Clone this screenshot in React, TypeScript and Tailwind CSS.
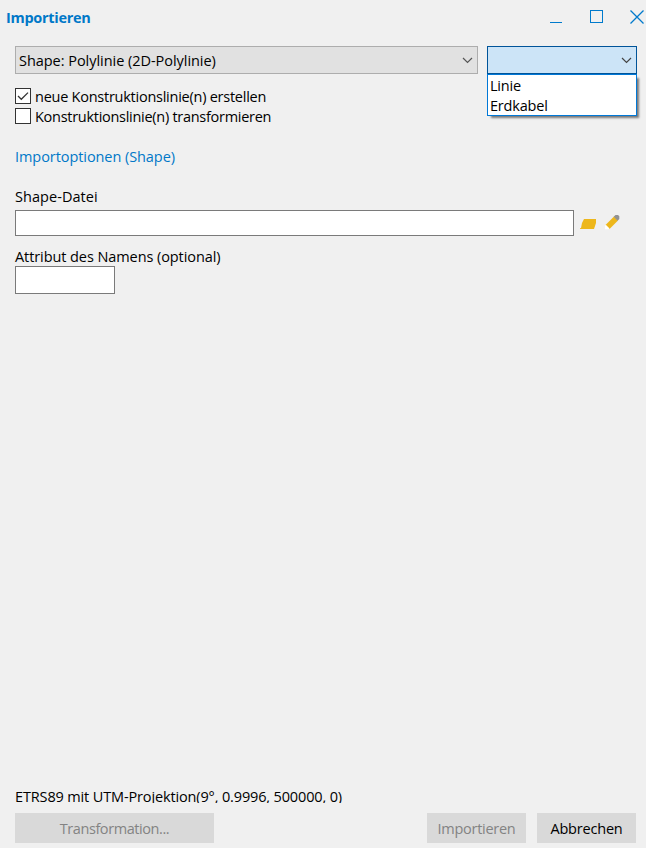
import type { ReactNode } from "react";

function Chevron({ color }: { color: string }) {
  return (
    <svg width="11" height="7" viewBox="0 0 11 7" fill="none" className="shrink-0">
      <path d="M1 1l4.5 4.5L10 1" stroke={color} strokeWidth="1.2" />
    </svg>
  );
}

function TitleBar() {
  return (
    <header className="flex h-[46px] items-start justify-between text-[#0078c8]">
      <h1 className="mt-2 ml-[6px] text-[14.5px] leading-5 font-bold tracking-[-0.3px]">Importieren</h1>
      <svg width="98" height="34" viewBox="548 0 98 34" fill="none" stroke="#007acc" shapeRendering="crispEdges">
        <path d="M550 22.5H562" />
        <path d="M590.5 10.5H602.5V22.5H590.5Z" />
        <path d="M630.5 10.5L643.5 23.5M643.5 10.5L630.5 23.5" strokeWidth="1.3" shapeRendering="auto" />
      </svg>
    </header>
  );
}

function CheckRow({ checked, children }: { checked?: boolean; children: ReactNode }) {
  return (
    <label className="flex h-5 items-center">
      <span className="mr-1 mb-[2px] flex h-4 w-4 items-center justify-center border border-[#333] bg-white">
        {checked && (
          <svg width="14" height="14" viewBox="0 0 14 14" fill="none">
            <path d="M2 7l3.3 3.3L12 3.6" stroke="#333" strokeWidth="1.3" />
          </svg>
        )}
      </span>
      {children}
    </label>
  );
}

export default function App() {
  return (
    <div className="flex h-[848px] w-[646px] flex-col overflow-hidden bg-[#f0f0f0] font-['Open_Sans','Noto_Sans',sans-serif] text-[14.5px] leading-5 whitespace-nowrap text-black">
      <TitleBar />
      <main className="flex flex-1 flex-col pl-[15px]">
        <div className="flex h-7 gap-[9px]">
          <div className="flex w-[463px] items-center justify-between border border-[#adadad] bg-[#e1e1e1] pr-1 pl-[3px]">
            <span className="pt-[2px] tracking-[-0.04px]">Shape: Polylinie (2D-Polylinie)</span>
            <Chevron color="#555" />
          </div>
          <div className="relative flex w-[150px] items-center justify-end border border-[#005499] bg-[#cce4f7] pr-1">
            <Chevron color="#444" />
            <div className="absolute top-[27px] -left-px h-[42px] w-[150px] border border-[#0078d7] bg-white pl-[2px] shadow-[3px_3px_2px_-1px_rgba(0,0,0,0.5)]">
              <div className="h-5 leading-[22px] tracking-[-0.2px]">Linie</div>
              <div className="h-5 leading-[22px] tracking-[-0.2px]">Erdkabel</div>
            </div>
          </div>
        </div>
        <div className="mt-[13px]">
          <CheckRow checked><span className="tracking-[-0.25px]">neue Konstruktionslinie(n) erstellen</span></CheckRow>
          <CheckRow><span className="tracking-[-0.28px]">Konstruktionslinie(n) transformieren</span></CheckRow>
        </div>
        <h2 className="mt-5 tracking-[-0.07px] text-[#0078c8]">Importoptionen (Shape)</h2>
        <span className="mt-5 self-start tracking-[0.05px]">Shape-Datei</span>
        <div className="mt-[3px] flex h-[26px]">
          <div className="w-[559px] border border-[#7a7a7a] bg-white" />
          <svg width="52" height="26" viewBox="574 210 52 26">
            <path d="M580 229V228.3L581 228L582 223L584 219H596V223L594 229Z" fill="#edb71c" />
            <path d="M605.5 225L614 216.5L618 220.5L609.5 229Z" fill="#edb71c" />
            <path d="M605 229.3V225.5L606 225L609.5 228.5L608.5 229.3Z" fill="#fff" />
            <path d="M613.7 216.8L615.5 215H618L619.3 216.3V219L617.6 220.7Z" fill="#929292" />
          </svg>
        </div>
        <span className="mt-[11px] self-start tracking-[-0.08px]">Attribut des Namens (optional)</span>
        <div className="mt-[-1px] h-7 w-[100px] border border-[#7a7a7a] bg-white" />
      </main>
      <footer className="pb-[5px] pl-[15px]">
        <div className="h-[16px] overflow-hidden leading-5"><span className="tracking-[-0.14px]">ETRS89 mit UTM-Projektion(9°, 0.9996, 500000, 0)</span></div>
        <div className="mt-[10px] flex h-[30px] pr-[10px]">
          <button className="w-[199px] bg-[#d9d9d9] pt-[2px] tracking-[-0.42px] text-[#838383]">Transformation...</button>
          <button className="ml-auto w-[99px] bg-[#d9d9d9] pt-[2px] tracking-[-0.28px] text-[#838383]">Importieren</button>
          <button className="ml-[11px] w-[99px] bg-[#d9d9d9] pt-[2px] tracking-[-0.2px]">Abbrechen</button>
        </div>
      </footer>
    </div>
  );
}
